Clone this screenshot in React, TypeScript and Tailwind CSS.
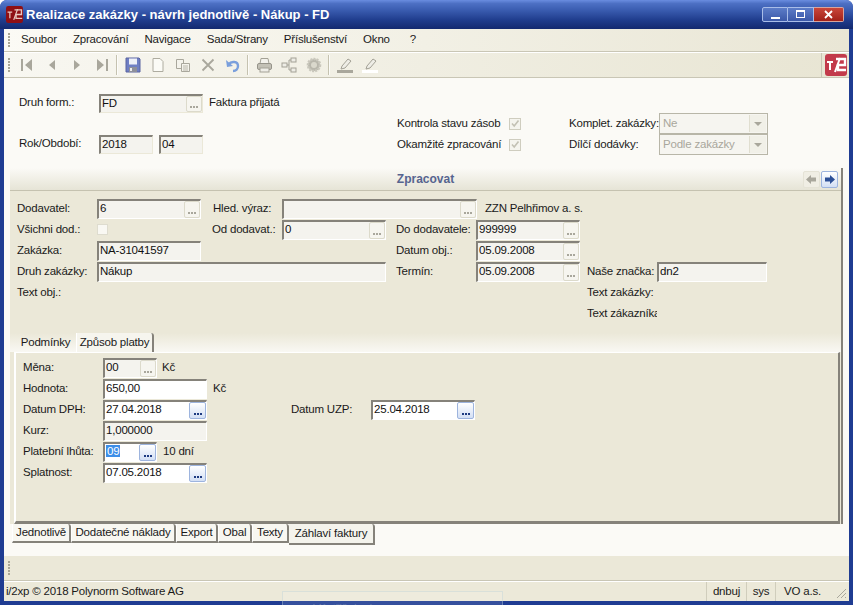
import type { ReactNode } from "react";

const Logo = ({ big }: { big?: boolean }) => (
  <svg width={big ? 22 : 17} height={big ? 22 : 17} viewBox="0 0 22 22">
    <rect width="22" height="22" rx="3" fill={big ? "#c23a4b" : "#8f0f14"} />
    <path d="M2 8h6M5 8v8M10 18l5-14" stroke={big ? "#fff" : "#e8c8c0"} strokeWidth={big ? 2 : 1.6} fill="none" />
    <path d="M11 5h9v6h-7v5h8" stroke={big ? "#fff" : "#e8c8c0"} strokeWidth={big ? 2.4 : 1.8} fill="none" />
  </svg>
);

const Grip = () => (
  <div className="flex flex-col gap-[1px] w-[2px] mr-[5px]">
    {[0, 1, 2, 3, 4].map((i) => (
      <div key={i} className="w-[2px] h-[2px] bg-[#a8a696]" />
    ))}
  </div>
);

const icon: Record<string, ReactNode> = {
  first: <path d="M2 2h2v12H2zM13 2v12L6 8z" fill="#a9a79c" />,
  prev: <path d="M11 3v10L5 8z" fill="#a9a79c" />,
  next: <path d="M5 3v10l6-5z" fill="#a9a79c" />,
  last: <path d="M12 2h2v12h-2zM3 2v12l7-6z" fill="#a9a79c" />,
  save: (
    <>
      <path d="M1 1h13l1 1v13H1z" fill="#6f7fc4" stroke="#5a64a0" />
      <rect x="4" y="1.5" width="8" height="6" fill="#eef0f8" />
      <rect x="4" y="10" width="8" height="5" fill="#8d8f9a" />
      <rect x="5" y="11" width="2" height="3" fill="#eee" />
    </>
  ),
  doc: <path d="M3 1.5h7l3 3v10H3z" fill="#fbfbf6" stroke="#aeaca0" />,
  copy: (
    <>
      <path d="M1.5 2.5h7v9h-7z" fill="#f4f3ec" stroke="#a9a79c" />
      <path d="M6.5 6.5h8v8h-8z" fill="#f4f3ec" stroke="#a9a79c" />
      <path d="M8 9h5M8 11h5M8 13h5" stroke="#b8b6aa" />
    </>
  ),
  del: <path d="M2.5 2.5l11 11M13.5 2.5l-11 11" stroke="#a9a79c" strokeWidth="1.8" />,
  undo: (
    <>
      <path d="M4 7c2-3 9-3 9 2 0 3-2 5-5 5" stroke="#7a9fdc" strokeWidth="2.4" fill="none" />
      <path d="M1 3l1 7 6-1z" fill="#7a9fdc" />
    </>
  ),
  print: (
    <>
      <path d="M5 1.5h7l1 5H4z" fill="#f3f2ec" stroke="#a3a196" />
      <rect x="1.5" y="6.5" width="14" height="6" rx="1.5" fill="#c3c1b6" stroke="#96948a" />
      <rect x="4" y="11" width="9" height="4" fill="#efeee8" stroke="#a3a196" />
    </>
  ),
  tree: (
    <>
      <rect x="1" y="6" width="5" height="4" fill="#eeede6" stroke="#a3a196" />
      <rect x="10" y="1" width="5" height="4" fill="#eeede6" stroke="#a3a196" />
      <rect x="10" y="11" width="5" height="4" fill="#eeede6" stroke="#a3a196" />
      <path d="M6 8h2M8 3h2M8 13h2M8 3v10" stroke="#a3a196" fill="none" />
    </>
  ),
  gear: (
    <>
      <circle cx="8" cy="8" r="6" fill="#b8b6ab" stroke="#c9c7bc" strokeWidth="2.6" strokeDasharray="2 1" />
      <circle cx="8" cy="8" r="3" fill="#dad8cc" />
    </>
  ),
  penDark: (
    <>
      <path d="M5 9l6-7 3 2-6 7-4 1z" fill="#eeede6" stroke="#a3a196" />
      <rect x="0" y="13" width="16" height="3" fill="#a9a79c" />
    </>
  ),
  penLight: (
    <>
      <path d="M5 9l6-7 3 2-6 7-4 1z" fill="#eeede6" stroke="#a3a196" />
      <rect x="0" y="13" width="16" height="3" fill="#fff" />
    </>
  ),
};

const Tool = ({ name }: { name: string }) => (
  <div className="w-[25px] h-[24px] flex items-center justify-center shrink-0">
    <svg width="16" height="16" viewBox="0 0 16 16">
      {icon[name]}
    </svg>
  </div>
);

const Sep = () => <div className="w-[2px] h-[20px] mx-[2px] border-l border-[#c5c2b0] bg-white/70 shrink-0" />;

const Dots = ({ active }: { active?: boolean }) => (
  <div
    className={
      active
        ? "w-[17px] h-full shrink-0 flex items-end justify-center pb-[3px] border border-[#9db4de] rounded-[2px] bg-gradient-to-b from-white to-[#d3dff4] text-[#1d3a80] font-bold"
        : "w-[16px] h-full shrink-0 flex items-end justify-center pb-[3px] border border-[#dcdacb] rounded-[2px] bg-[#f6f5ef] text-[#a9a79c]"
    }
  >
    <span className="flex gap-[1px]">
      <i className="w-[2px] h-[2px] bg-current" />
      <i className="w-[2px] h-[2px] bg-current" />
      <i className="w-[2px] h-[2px] bg-current" />
    </span>
  </div>
);

const Field = ({
  className,
  value,
  btn,
  active,
  white,
  selected,
  top,
}: {
  className: string;
  value?: string;
  btn?: boolean;
  active?: boolean;
  white?: boolean;
  selected?: boolean;
  top?: boolean;
}) => (
  <div
    className={`${className} ${top ? "h-[19px]" : "h-[20px]"} shrink-0 flex border-t-2 border-l-2 border-t-[#85827a] border-l-[#85827a] border-r border-b ${
      top ? "border-r-[#ebe8d8] border-b-[#ebe8d8]" : "border-r-white border-b-white"
    } ${white ? "bg-white" : "bg-[#f4f3ee]"}`}
  >
    <div className="flex-1 min-w-0 pl-[1px] leading-[15px] text-[#111] overflow-hidden whitespace-nowrap">
      {selected ? <span className="bg-[#3d8ee8] text-white px-[1px]">{value}</span> : value}
    </div>
    {btn && <Dots active={active} />}
  </div>
);

const Row = ({ children }: { children: ReactNode }) => (
  <div className="h-[21px] flex items-center whitespace-nowrap">{children}</div>
);

const Tab = ({ className, children }: { className: string; children: ReactNode }) => (
  <div className={`${className} h-[19px] flex items-center justify-center whitespace-nowrap bg-[#f8f7f1] border-r-2 border-b-2 border-r-[#85827a] border-b-[#85827a] border-l border-l-white rounded-tr-[3px] shrink-0`}>
    {children}
  </div>
);

const Check = () => (
  <svg width="12" height="12" viewBox="0 0 12 12" className="shrink-0">
    <rect x="0.5" y="0.5" width="11" height="11" fill="#f5f4ee" stroke="#cfcdbf" />
    <path d="M3 5.5l2.2 2.5L9.5 2.5" stroke="#c3c1b4" strokeWidth="1.6" fill="none" />
  </svg>
);

const Combo = ({ value }: { value: string }) => (
  <div className="w-[109px] h-[21px] ml-[4px] flex border border-[#b8b6a8] bg-[#f6f5f0] text-[#a9a79c] pl-[3px] pr-[1px] py-[1px]">
    <div className="flex-1 leading-[17px]">{value}</div>
    <div className="w-[17px] flex items-center justify-center bg-[#f1f0e8] border-l border-[#e0ded0]">
      <i className="w-0 h-0 border-x-[4px] border-x-transparent border-t-[4px] border-t-[#a9a79c]" />
    </div>
  </div>
);

const Arrow = ({ dir, active }: { dir: "l" | "r"; active?: boolean }) => (
  <div
    className={
      active
        ? "w-[17px] h-[17px] flex items-center justify-center border border-[#9db4de] rounded-[2px] bg-gradient-to-b from-white to-[#d3dff4]"
        : "w-[17px] h-[17px] flex items-center justify-center bg-[#f0eee4] border border-[#e5e3d6] rounded-[2px]"
    }
  >
    <svg width="11" height="9" viewBox="0 0 11 9">
      {dir === "l" ? (
        <path d="M0 4.5L5 0v2.5h5v4H5V9z" fill="#a9a79c" />
      ) : (
        <path d="M11 4.5L6 0v2.5H1v4h5V9z" fill="#2c4f96" />
      )}
    </svg>
  </div>
);

export default function App() {
  return (
    <div className="relative w-[853px] h-[605px] overflow-hidden flex flex-col bg-[#1f3c92] rounded-t-[7px] font-['Liberation_Sans',sans-serif] text-[11.5px] tracking-[-0.2px] text-[#1a1a1a]">
      {/* title bar */}
      <div className="h-[29px] shrink-0 flex items-center pl-[6px] pr-[9px] bg-[linear-gradient(#6a8de0_0%,#4d70c4_12%,#3a5cb0_35%,#1f3c8c_70%,#13296f_100%)]">
        <Logo />
        <div className="ml-[3px] flex-1 text-white font-bold text-[13px] tracking-normal">
          Realizace zakázky - návrh jednotlivě - Nákup - FD
        </div>
        <div className="flex mb-[1px]">
          <div className="w-[26px] h-[15px] flex items-end justify-center pb-[2px] border border-[#a9bde8] rounded-l-[2px] bg-gradient-to-b from-[#5c7cc8] to-[#3b58a8]">
            <i className="w-[9px] h-[2px] bg-white" />
          </div>
          <div className="w-[26px] h-[15px] flex items-center justify-center border-y border-r border-[#a9bde8] bg-gradient-to-b from-[#5c7cc8] to-[#3b58a8]">
            <i className="w-[9px] h-[8px] border border-white border-t-2" />
          </div>
          <div className="w-[30px] h-[15px] flex items-center justify-center border-y border-r border-[#d8a49c] rounded-r-[2px] bg-gradient-to-b from-[#c9463a] to-[#a22018]">
            <svg width="9" height="9" viewBox="0 0 9 9">
              <path d="M1 1l7 7M8 1L1 8" stroke="#fff" strokeWidth="1.8" />
            </svg>
          </div>
        </div>
      </div>

      <div className="flex-1 min-h-0 mx-[4px] mb-[4px] flex flex-col bg-[#fbfaf6]">
        {/* menu */}
        <div className="h-[23px] shrink-0 flex items-center pl-[4px] border-b border-[#c9c6b5] bg-gradient-to-r from-[#fbfaf5] to-[#e9e6d5]">
          <Grip />
          <div className="flex gap-[16px] ml-[6px]">
            <span>Soubor</span>
            <span>Zpracování</span>
            <span>Navigace</span>
            <span>Sada/Strany</span>
            <span>Příslušenství</span>
            <span>Okno</span>
            <span className="ml-[4px]">?</span>
          </div>
        </div>
        {/* toolbar */}
        <div className="h-[26px] shrink-0 flex items-center pl-[4px] border-t border-white border-b border-b-[#c9c6b5] bg-gradient-to-r from-[#f8f7f1] to-[#e8e5d3]">
          <Grip />
          <div className="flex items-center flex-1 ml-[-1px]">
            <Tool name="first" />
            <Tool name="prev" />
            <Tool name="next" />
            <Tool name="last" />
            <Sep />
            <Tool name="save" />
            <Tool name="doc" />
            <Tool name="copy" />
            <Tool name="del" />
            <Tool name="undo" />
            <Sep />
            <Tool name="print" />
            <Tool name="tree" />
            <Tool name="gear" />
            <Sep />
            <Tool name="penDark" />
            <Tool name="penLight" />
          </div>
          <div className="w-[28px] h-[24px] flex items-center justify-center border-l border-[#c9c6b5]">
            <Logo big />
          </div>
        </div>

        {/* header form */}
        <div className="h-[90px] shrink-0 flex pl-[15px] pt-[15px] whitespace-nowrap">
          <div className="w-[378px] shrink-0">
            <div className="flex items-center h-[20px]">
              <span className="w-[80px]">Druh form.:</span>
              <Field top className="w-[104px]" value="FD" btn />
              <span className="ml-[6px]">Faktura přijatá</span>
            </div>
            <div className="flex items-center h-[20px] mt-[21px]">
              <span className="w-[80px]">Rok/Období:</span>
              <Field top className="w-[54px]" value="2018" />
              <Field top className="w-[44px] ml-[6px]" value="04" />
            </div>
          </div>
          <div className="mt-[20px]">
            <div className="flex items-center h-[21px]">
              <span className="w-[112px]">Kontrola stavu zásob</span>
              <Check />
              <span className="ml-[48px] w-[86px]">Komplet. zakázky:</span>
              <Combo value="Ne" />
            </div>
            <div className="flex items-center h-[21px]">
              <span className="w-[112px]">Okamžité zpracování</span>
              <Check />
              <span className="ml-[48px] w-[86px]">Dílčí dodávky:</span>
              <Combo value="Podle zakázky" />
            </div>
          </div>
        </div>

        {/* Zpracovat panel */}
        <div className="mx-[6px] h-[356px] shrink-0 flex flex-col border-r-2 border-[#85827a] bg-[#ebe8d8]">
          <div className="h-[23px] shrink-0 relative flex items-center justify-center border-b border-[#c5c2b0] bg-gradient-to-b from-[#fbfaf6] to-[#e6e4d6]">
            <span className="font-bold text-[12px] tracking-normal text-[#56648f]">Zpracovat</span>
            <div className="absolute right-[3px] top-[3px] flex gap-[1px]">
              <Arrow dir="l" />
              <Arrow dir="r" active />
            </div>
          </div>
          <div className="h-[142px] shrink-0 pl-[7px] pt-[7px]">
            <Row>
              <span className="w-[80px]">Dodavatel:</span>
              <Field className="w-[104px]" value="6" btn />
              <span className="ml-[12px] w-[69px]">Hled. výraz:</span>
              <Field className="w-[195px]" btn />
              <span className="ml-[8px]">ZZN Pelhřimov a. s.</span>
            </Row>
            <Row>
              <span className="w-[80px]">Všichni dod.:</span>
              <div className="w-[11px] h-[11px] bg-[#f9f8f3] border border-[#dedccf]" />
              <span className="ml-[104px] w-[70px]">Od dodavat.:</span>
              <Field className="w-[104px]" value="0" btn />
              <span className="ml-[10px] w-[80px]">Do dodavatele:</span>
              <Field className="w-[104px]" value="999999" btn />
            </Row>
            <Row>
              <span className="w-[80px]">Zakázka:</span>
              <Field className="w-[104px]" value="NA-31041597" />
              <span className="ml-[195px] w-[80px]">Datum obj.:</span>
              <Field className="w-[104px]" value="05.09.2008" btn />
            </Row>
            <Row>
              <span className="w-[80px]">Druh zakázky:</span>
              <Field className="w-[289px]" value="Nákup" />
              <span className="ml-[10px] w-[80px]">Termín:</span>
              <Field className="w-[104px]" value="05.09.2008" btn />
              <span className="ml-[7px] w-[70px]">Naše značka:</span>
              <Field className="w-[110px]" value="dn2" />
            </Row>
            <Row>
              <span className="w-[570px]">Text obj.:</span>
              <span>Text zakázky:</span>
            </Row>
            <Row>
              <span className="ml-[570px] w-[70px] overflow-hidden">Text zákazníka</span>
            </Row>
          </div>
          {/* inner tabs */}
          <div className="h-[19px] shrink-0 flex items-end pl-[5px] whitespace-nowrap bg-gradient-to-b from-[#ebe8d8] to-[#f9f8f3]">
            <div className="w-[61px] h-[19px] flex items-center justify-center">Podmínky</div>
            <div className="w-[78px] h-[19px] flex items-center justify-center border-l border-r-2 border-l-white border-r-[#85827a] bg-[#f6f5ee] rounded-tr-[3px]">
              Způsob platby
            </div>
          </div>
          <div className="ml-[4px] mr-[1px] h-[172px] shrink-0 pl-[7px] pt-[4px] border-l-2 border-t border-white border-r-2 border-b-[3px] border-r-[#85827a] border-b-[#85827a] bg-[#ebe8d8]">
            <Row>
              <span className="w-[80px]">Měna:</span>
              <Field className="w-[54px]" value="00" btn />
              <span className="ml-[5px]">Kč</span>
            </Row>
            <Row>
              <span className="w-[80px]">Hodnota:</span>
              <Field white className="w-[104px]" value="650,00" />
              <span className="ml-[6px]">Kč</span>
            </Row>
            <Row>
              <span className="w-[80px]">Datum DPH:</span>
              <Field white className="w-[104px]" value="27.04.2018" btn active />
              <span className="ml-[84px] w-[80px]">Datum UZP:</span>
              <Field white className="w-[104px]" value="25.04.2018" btn active />
            </Row>
            <Row>
              <span className="w-[80px]">Kurz:</span>
              <Field className="w-[104px]" value="1,000000" />
            </Row>
            <Row>
              <span className="w-[80px]">Platební lhůta:</span>
              <Field white selected className="w-[54px]" value="09" btn active />
              <span className="ml-[6px]">10 dní</span>
            </Row>
            <Row>
              <span className="w-[80px]">Splatnost:</span>
              <Field white className="w-[104px]" value="07.05.2018" btn active />
            </Row>
          </div>
        </div>

        {/* bottom tabs */}
        <div className="ml-[8px] h-[22px] shrink-0 flex items-start">
          <Tab className="w-[59px]">Jednotlivě</Tab>
          <Tab className="w-[105px]">Dodatečné náklady</Tab>
          <Tab className="w-[42px]">Export</Tab>
          <Tab className="w-[34px]">Obal</Tab>
          <Tab className="w-[37px]">Texty</Tab>
          <div className="w-[86px] h-[21px] flex items-center justify-center whitespace-nowrap bg-[#f4f3ec] border-r-2 border-b-2 border-[#85827a] rounded-tr-[3px]">
            Záhlaví faktury
          </div>
        </div>

        <div className="flex-1" />

        {/* empty grey bar */}
        <div className="h-[25px] shrink-0 flex items-center pl-[4px] bg-[#ebe8d8] border-b border-[#c9c6b5]">
          <Grip />
        </div>

        {/* status */}
        <div className="h-[20px] shrink-0 flex items-center border-t border-white bg-[#ece9d9] whitespace-nowrap">
          <span className="flex-1 pl-[2px]">i/2xp © 2018 Polynorm Software AG</span>
          <span className="w-[40px] h-full flex items-center justify-center border-l border-[#d0cdbc]">dnbuj</span>
          <span className="w-[29px] h-full flex items-center justify-center border-l border-[#d0cdbc]">sys</span>
          <span className="w-[54px] h-full flex items-center justify-center border-l border-[#d0cdbc]">VO a.s.</span>
          <svg width="12" height="12" viewBox="0 0 12 12" className="mr-[2px] self-end mb-[2px] shrink-0 ml-[6px]">
            <path d="M2 11l9-9M6 11l5-5M10 11l1-1" stroke="#a9a79c" />
          </svg>
        </div>
      </div>

      {/* faint window behind the screenshot */}
      <div className="absolute left-[282px] top-[591px] w-[221px] h-[20px] border border-[#b8d0d8]/40 bg-white/10 pl-[30px] pt-[8px] text-[#8090b0]/60 text-[12px]">
        Výstřižek okna
      </div>
    </div>
  );
}
